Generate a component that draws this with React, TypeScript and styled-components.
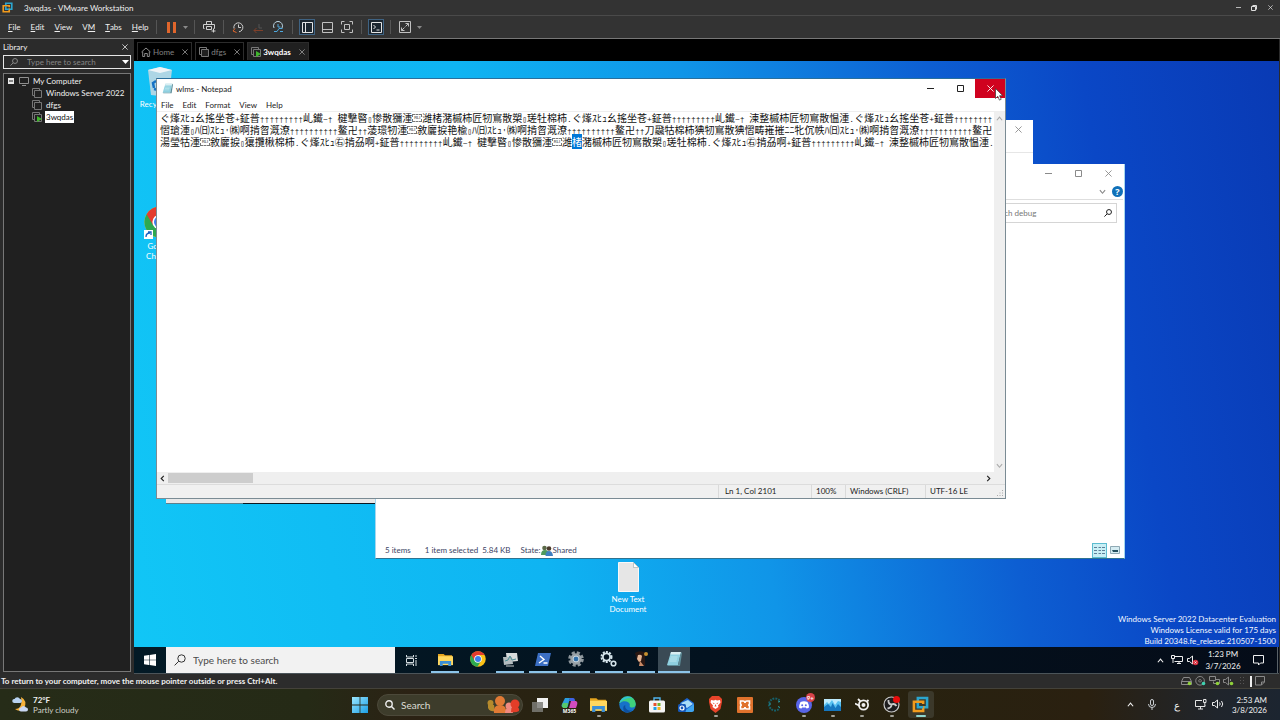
import React from "react";
import styled, { createGlobalStyle, css } from "styled-components";

const ui = `Lato, "Open Sans", "Noto Sans", sans-serif`;

const Global = createGlobalStyle`
  * { box-sizing: border-box; }
  body { margin: 0; background: #2b2b2b; font-family: ${ui}; font-size: 8px; line-height: 12px; }
  button, input { font: inherit; color: inherit; }
  svg { display: block; flex: none; }
`;

const Plain = styled.button`
  display: flex;
  align-items: center;
  justify-content: center;
  padding: 0;
  border: 0;
  background: none;
  white-space: nowrap;
`;

/* ---------- VMware shell ---------- */

const Screen = styled.div`
  display: flex;
  flex-direction: column;
  min-height: 100vh;
  color: #f0f0f0;
  overflow: hidden;
`;

const TitleBar = styled.header`
  display: flex;
  align-items: center;
  gap: 11px;
  height: 16px;
  padding: 0 4px 0 2px;
  background: #333;
  border-bottom: 1px solid #4a4a4a;
`;

const Caption = styled.h1`
  flex: 1;
  margin: 0;
  font-size: 8px;
  font-weight: 400;
`;

const WindowControls = styled.div`
  display: flex;
  gap: 4px;
`;

const ControlButton = styled(Plain)`
  width: 12px;
  height: 14px;
`;

const MenuBar = styled.nav`
  display: flex;
  align-items: center;
  height: 23px;
  padding-left: 8px;
  background: #333;
  border-bottom: 1px solid #777;
`;

const Menus = styled.div`
  display: flex;
  gap: 10px;
  width: 144px;
`;

const Separator = styled.span`
  width: 1px;
  height: 14px;
  margin: 0 4px;
  background: #555;
`;

const Tool = styled(Plain)<{ $on?: boolean }>`
  width: ${(p) => (p.$on ? 16 : 20)}px;
  height: 16px;
  margin: 0 ${(p) => (p.$on ? 2 : 0)}px;
  border: ${(p) => (p.$on ? "1px solid #3f6383" : "0")};
  background: ${(p) => (p.$on ? "#1d2730" : "none")};
`;

const Caret = styled(Plain)`
  width: 9px;
  height: 16px;
`;

const Body = styled.div`
  display: flex;
  flex: 1;
`;

const Sidebar = styled.aside`
  display: flex;
  flex-direction: column;
  width: 134px;
  padding: 2px 3px 2px;
  background: #2b2b2b;
`;

const SidebarHead = styled.div`
  display: flex;
  justify-content: space-between;
  align-items: center;
  height: 12px;
  margin-bottom: 2px;
  padding-right: 3px;
`;

const LibrarySearch = styled.label`
  display: flex;
  align-items: center;
  gap: 9px;
  height: 14px;
  padding: 0 1px 0 6px;
  border: 1px solid #e6e6e6;
  margin-bottom: 4px;
  color: #858585;

  input {
    flex: 1;
    min-width: 0;
    height: 12px;
    padding: 0;
    border: 0;
    outline: 0;
    background: none;
  }
  input::placeholder { color: #858585; opacity: 1; }
`;

const Tree = styled.ul`
  flex: 1;
  margin: 0;
  padding: 1px 4px 0;
  list-style: none;
  border: 1px solid #777;
  background: #202020;
`;

const Leaf = styled.li<{ $child?: boolean }>`
  display: flex;
  align-items: center;
  gap: 3px;
  height: 12px;
  padding-left: ${(p) => (p.$child ? 24 : 0)}px;
`;

const LeafName = styled.span<{ $selected?: boolean }>`
  padding: 0 1px;
  line-height: 12px;
  white-space: nowrap;
  ${(p) => p.$selected && css`background: #fff; color: #111;`}
`;

const Guest = styled.main`
  display: flex;
  flex-direction: column;
  flex: 1;
  min-width: 0;
  padding-right: 1px;
`;

const Tabs = styled.div`
  display: flex;
  align-items: flex-end;
  gap: 3px;
  height: 22px;
  padding: 0 3px 1px;
  background: #000;
`;

const Tab = styled.div<{ $active?: boolean }>`
  display: flex;
  align-items: center;
  gap: 5px;
  height: 18px;
  padding: 0 0 0 3px;
  border: 1px solid #2c2c2c;
  border-bottom: 0;
  background: ${(p) => (p.$active ? "#202020" : "#000")};
  color: ${(p) => (p.$active ? "#fff" : "#808080")};
  font-weight: ${(p) => (p.$active ? 700 : 400)};
`;

const TabName = styled(Plain)`
  gap: 2px;
`;

const TabClose = styled(Plain)`
  width: 12px;
  height: 12px;
  color: #a0a0a0;
`;

/* ---------- Guest desktop ---------- */

const Desktop = styled.section`
  position: relative;
  flex: 1;
  overflow: hidden;
  background: linear-gradient(80deg, #11c6f6 0%, #0fb4f2 34%, #1095e8 52%, #0d5ed2 72%, #0a47c6 84%, #093ab4 100%);
`;

const DesktopIcon = styled.div<{ $x: number; $y: number }>`
  position: absolute;
  left: ${(p) => p.$x}px;
  top: ${(p) => p.$y}px;
  display: flex;
  flex-direction: column;
  align-items: center;
  gap: 2px;
  width: 60px;
  color: #fff;
  line-height: 10px;
  text-align: center;
`;

const Frame = styled.section<{ $x: number; $y: number; $w: number; $h: number }>`
  position: absolute;
  left: ${(p) => p.$x}px;
  top: ${(p) => p.$y}px;
  display: flex;
  flex-direction: column;
  width: ${(p) => p.$w}px;
  height: ${(p) => p.$h}px;
  background: #fff;
  color: #222;
`;

const FrameTitle = styled.header`
  display: flex;
  align-items: center;
  justify-content: flex-end;
  flex: none;
  height: 19px;
`;

const FrameButton = styled(Plain)<{ $tone?: "hot" | "dark" }>`
  width: 30px;
  height: 19px;
  background: ${(p) => (p.$tone === "hot" ? "#d0021f" : "none")};
  color: ${(p) => (p.$tone === "hot" ? "#fff" : p.$tone === "dark" ? "#222" : "#8a8a8a")};
`;

const PropertiesBody = styled.div`
  flex: 1;
  margin-top: 13px;
  border-top: 1px solid #e6e6e6;
`;

const PropertiesFoot = styled.div`
  display: flex;
  height: 5px;
  border-bottom: 1px solid #5d7f8c;
  background: #e8e8e8;

  i { flex: 1; margin: 4px 0 -1px 77px; background: #0b1720; }
`;

const ExplorerFrame = styled(Frame)`
  padding-right: 1px;
  border: 1px solid #a5d6ee;
  border-top: 0;
  border-bottom-color: #2f7391;
`;

const Ribbon = styled.div`
  display: flex;
  align-items: center;
  justify-content: flex-end;
  gap: 6px;
  height: 17px;
  border-bottom: 1px solid #dedede;
  color: #888;
`;

const ExplorerSearch = styled.label`
  display: flex;
  align-items: center;
  align-self: flex-end;
  width: 145px;
  height: 20px;
  margin: 3px 6px 0 0;
  padding: 0 4px 0 16px;
  border: 1px solid #d5d5d5;

  input {
    flex: 1;
    min-width: 0;
    padding: 0;
    border: 0;
    outline: 0;
    background: none;
  }
  input::placeholder { color: #777; opacity: 1; }
`;

const ExplorerStatus = styled.footer`
  display: flex;
  align-items: center;
  height: 16px;
  margin-top: auto;
  padding: 0 2px 0 9px;
  color: #3b4464;

  span { margin-right: 14px; }
  span:nth-child(2) { margin-right: 4px; }
  span:nth-child(3) { margin-right: 10px; }
`;

const ViewModes = styled.div`
  display: flex;
  align-items: center;
  gap: 2px;
  margin-left: auto;
`;

const ViewButton = styled(Plain)<{ $on?: boolean }>`
  width: ${(p) => (p.$on ? 15 : 12)}px;
  height: 15px;
  border: ${(p) => (p.$on ? "1px solid #5cbcd0" : "0")};
  background: ${(p) => (p.$on ? "#c9eff5" : "none")};
`;

const NotepadFrame = styled(Frame)`
  border: 1px solid #7a8b94;
  border-top-color: #2a6f9c;
`;

const NotepadTitle = styled.div`
  display: flex;
  align-items: center;
  gap: 3px;
  flex: 1;
  padding-left: 5px;
`;

const NotepadMenu = styled.div`
  display: flex;
  gap: 9px;
  height: 14px;
  padding: 1px 0 0 4px;
  border-bottom: 1px solid #eee;
`;

const NotepadMain = styled.div`
  display: flex;
  flex: 1;
  min-height: 0;
`;

const Sheet = styled.div`
  flex: 1;
  min-width: 0;
  padding-left: 3px;
  overflow: hidden;
  color: #111;
  font-family: "Noto Sans CJK SC", "Noto Sans CJK JP", "DejaVu Sans Mono", sans-serif;
  font-size: 10px;
  line-height: 12px;
  white-space: pre;
`;

const Line = styled.div`
  height: 12px;
`;

const Mono = styled.span`
  font-family: "Liberation Mono", monospace;
  font-size: 8px;
`;

const Selected = styled.mark`
  background: #0078d7;
  color: #fff;
`;

const ControlMark = styled.span`
  display: inline-block;
  width: 10px;
  height: 8px;
  border: 1px dashed #777;
  font-family: "Liberation Sans", sans-serif;
  font-size: 4px;
  line-height: 6px;
  text-align: center;
  vertical-align: top;
  margin-top: 2px;
`;

const VBar = styled.div`
  display: flex;
  flex-direction: column;
  align-items: center;
  justify-content: space-between;
  width: 11px;
  padding: 3px 0;
  background: #efefef;
  color: #aaa;
`;

const HBar = styled.div`
  display: flex;
  align-items: center;
  height: 12px;
  padding: 0 13px 0 2px;
  background: #efefef;
`;

const Track = styled.div`
  flex: 1;
  margin: 0 2px;
`;

const Thumb = styled.div`
  width: 85px;
  height: 10px;
  background: #cdcdcd;
`;

const NotepadStatus = styled.footer`
  display: flex;
  justify-content: flex-end;
  position: relative;
  height: 14px;
  border-top: 1px solid #dcdcdc;
  background: #f0f0f0;
`;

const StatusCell = styled.span<{ $w: number; $pad?: number }>`
  width: ${(p) => p.$w}px;
  padding-left: ${(p) => p.$pad ?? 4}px;
  border-left: 1px solid #dadada;
  white-space: nowrap;
`;

const Grip = styled.svg`
  position: absolute;
  right: 1px;
  bottom: 1px;
`;

const Pointer = styled.svg`
  position: absolute;
  left: 861px;
  top: 27px;
`;

const Watermark = styled.p`
  position: absolute;
  right: 3px;
  bottom: 0;
  margin: 0;
  color: #f4f8ff;
  line-height: 11px;
  text-align: right;
`;

/* ---------- Guest taskbar ---------- */

const GuestBar = styled.footer`
  display: flex;
  height: 27px;
  background: linear-gradient(90deg, #031a26, #03121f 50%, #050c18);
  border-bottom: 1px solid #4b5459;
`;

const StartButton = styled(Plain)`
  width: 32px;
`;

const GuestSearch = styled.label`
  display: flex;
  align-items: center;
  gap: 7px;
  width: 229px;
  padding-left: 8px;
  background: #f2f2f2;
  color: #333;
  font-size: 10px;

  input {
    flex: 1;
    min-width: 0;
    padding: 0;
    border: 0;
    outline: 0;
    background: none;
  }
  input::placeholder { color: #4a4a4a; opacity: 1; }
`;

const GuestApps = styled.div`
  display: flex;
  justify-content: space-between;
  width: 261px;
  margin-left: 2px;
`;

const GuestApp = styled(Plain)<{ $open?: boolean; $active?: boolean }>`
  width: 32px;
  background: ${(p) => (p.$active ? "#3a4a55" : "none")};
  border-style: solid;
  border-width: 0 0 2px;
  border-color: transparent;
  border-image: ${(p) =>
    p.$active
      ? "linear-gradient(#8cc4ea, #8cc4ea) 1"
      : p.$open
      ? "linear-gradient(90deg, transparent 9%, #8cc4ea 9%, #8cc4ea 91%, transparent 91%) 1"
      : "none"};
`;

const GuestTray = styled.div`
  display: flex;
  align-items: center;
  gap: 3px;
  margin-left: auto;
  padding-right: 1px;
`;

const TrayButton = styled(Plain)`
  width: 13px;
  height: 18px;
`;

const NoticeButton = styled(Plain)`
  width: 33px;
  height: 26px;
  padding-right: 5px;
  border-right: 1px solid #5a6268;
`;

const Clock = styled.time`
  width: 40px;
  padding-left: 2px;
  text-align: center;
`;

/* ---------- Status line and host taskbar ---------- */

const StatusLine = styled.footer`
  display: flex;
  align-items: center;
  justify-content: space-between;
  height: 15px;
  padding: 0 14px 0 1px;
  background: #2c2c2c;
  border-bottom: 1px solid #44423a;
  font-weight: 700;
`;

const Devices = styled.div`
  display: flex;
  align-items: center;
  gap: 3px;
`;

const HostBar = styled.footer`
  display: grid;
  grid-template-columns: 1fr auto 1fr;
  align-items: center;
  height: 31px;
  background: linear-gradient(90deg, #262c18 0%, #252a16 24%, #2b2214 32%, #26240f 55%, #2a2010 85%, #20252c 95%, #1c2530 100%);
`;

const Weather = styled(Plain)`
  justify-self: start;
  gap: 4px;
  padding-left: 12px;
  text-align: left;
  line-height: 10px;

  strong { display: block; font-weight: 700; }
  small { font-size: 8px; color: #d0d0c8; }
`;

const Dock = styled.div`
  display: flex;
  align-items: center;
  width: 588px;
`;

const HostStart = styled(Plain)`
  width: 31px;
  height: 27px;
  padding-right: 3px;
`;

const HostSearch = styled.label`
  display: flex;
  align-items: center;
  gap: 6px;
  width: 146px;
  height: 22px;
  padding-left: 7px;
  padding-right: 2px;
  border: 1px solid #4c493a;
  border-radius: 11px;
  background: #3d3c2b;
  font-size: 10px;

  input {
    flex: 1;
    min-width: 0;
    padding: 0;
    border: 0;
    outline: 0;
    background: none;
  }
  input::placeholder { color: #dcdcd4; opacity: 1; }
`;

const DockApps = styled.div`
  display: flex;
  flex: 1;
  justify-content: space-between;
  margin-left: 4px;
`;

const DockApp = styled(Plain)<{ $run?: boolean; $active?: boolean }>`
  position: relative;
  width: 26px;
  height: 27px;
  border-radius: 3px;
  background: ${(p) => (p.$active ? "#3b382a" : "none")};

  &::after {
    content: "";
    position: absolute;
    bottom: 1px;
    left: 50%;
    width: ${(p) => (p.$active ? 10 : 4)}px;
    height: 2px;
    border-radius: 1px;
    transform: translateX(-50%);
    background: ${(p) => (p.$active ? "#8fd6d0" : p.$run ? "#a3a299" : "transparent")};
  }
`;

const Badge = styled.span`
  position: absolute;
  top: 2px;
  right: 2px;
  min-width: 9px;
  height: 9px;
  border-radius: 5px;
  background: #d9434a;
  color: #fff;
  font-size: 6px;
  font-weight: 700;
  line-height: 9px;
`;

const HostTray = styled.div`
  display: flex;
  align-items: center;
  justify-self: end;
  padding-right: 13px;
`;

const HostTrayButton = styled(Plain)<{ $w: number }>`
  width: ${(p) => p.$w}px;
  height: 20px;
  font-size: 10px;
`;

const HostClock = styled.time`
  width: 42px;
  line-height: 10px;
  text-align: right;
`;

/* ---------- Small drawings ---------- */

const Cross = ({ s = 7 }: { s?: number }) => (
  <svg width={s} height={s} viewBox="0 0 8 8" stroke="currentColor" fill="none"><path d="M.5.5l7 7M7.5.5l-7 7" /></svg>
);
const Dash = ({ s = 7 }: { s?: number }) => (
  <svg width={s} height={s} viewBox="0 0 7 7" stroke="currentColor"><path d="M0 3.5h7" /></svg>
);
const Square = ({ s = 7 }: { s?: number }) => (
  <svg width={s} height={s} viewBox="0 0 7 7" stroke="currentColor" fill="none"><path d="M.5.5h6v6h-6z" /></svg>
);
const Lens = ({ s = 9 }: { s?: number }) => (
  <svg width={s} height={s} viewBox="0 0 12 12" stroke="currentColor" strokeWidth={12 / s} fill="none"><circle cx="7.5" cy="4.5" r="3.7" /><path d="M4.8 7.2L.6 11.4" /></svg>
);
const Down = () => (
  <svg width="5" height="3" viewBox="0 0 5 3"><path d="M0 0h5L2.5 3z" fill="#8a8a8a" /></svg>
);
const Chevron = ({ d }: { d: "u" | "d" | "l" | "r" }) => (
  <svg width="7" height="7" viewBox="0 0 8 8" fill="none" stroke="currentColor" strokeWidth="1.3">
    <path d={{ u: "M1 6l3-3.5L7 6", d: "M1 2.5L4 6l3-3.5", l: "M5.5 1L2.5 4l3 3", r: "M2.5 1l3 3-3 3" }[d]} />
  </svg>
);
const VmLogo = ({ s }: { s: number }) => (
  <svg width={s} height={s} viewBox="0 0 16 16" fill="none" strokeWidth="2.4">
    <path d="M5.5 7V1.8h8.7v8.7H10" stroke="#2ba5cf" />
    <path d="M10.5 9.5v4.7H1.8V5.5h8.7v2" stroke="#f29b1d" />
    <path d="M5.5 6.5v4h5" stroke="#2ba5cf" />
  </svg>
);
const Vm = ({ on }: { on?: boolean }) => (
  <svg width="10" height="10" viewBox="0 0 10 10" fill="none" stroke="#777">
    <path d="M2 7.5H.5v-7h7V2" /><path d="M2.5 2.5h7v7h-7z" fill="#202020" />
    {on && <path d="M5 4l5 3-5 3z" fill="#3fb52c" stroke="none" />}
  </svg>
);
const Monitor = () => (
  <svg width="10" height="9" viewBox="0 0 10 9" fill="none" stroke="#8f8f8f"><path d="M.5.5h9v6h-9zM3 8.5h4" /></svg>
);
const HomeIcon = () => (
  <svg width="10" height="10" viewBox="0 0 10 10" fill="none" stroke="#8b8b8b"><path d="M.5 5L5 1l4.500 4M1.700 4.500v5h2v-3h2.600v3h2v-5" /></svg>
);
const Flag10 = ({ s = 12 }: { s?: number }) => (
  <svg width={s} height={s} viewBox="0 0 12 12" fill="#fff"><path d="M0 1.700l5-.7v4.700H0zM5.600.9L12 0v5.700H5.600zM0 6.300h5V11l-5-.7zM5.600 6.300H12V12l-6.400-.9z" /></svg>
);
const Flag11 = () => (
  <svg width="16" height="16" viewBox="0 0 16 16">
    <defs><linearGradient id="w11" x1="0" y1="0" x2="1" y2="1"><stop offset="0" stopColor="#9be6ff" /><stop offset="1" stopColor="#1b9fe4" /></linearGradient></defs>
    <path fill="url(#w11)" d="M0 0h7.600v7.600H0zM8.400 0H16v7.600H8.400zM0 8.400h7.600V16H0zM8.400 8.400H16V16H8.400z" />
  </svg>
);
const Folder = ({ s = 16 }: { s?: number }) => (
  <svg width={s} height={s} viewBox="0 0 16 16">
    <path d="M0 2h6l1.500 1.500H15V8H0z" fill="#e5a51f" /><path d="M0 4.500h16V14H0z" fill="#ffd75e" />
    <path d="M2 15V9.500h12V15h-3v-2.500H5V15z" fill="#3a8fd6" />
  </svg>
);
const Chrome = ({ s = 16 }: { s?: number }) => (
  <svg width={s} height={s} viewBox="0 0 32 32">
    <circle cx="16" cy="16" r="15.500" fill="#fbc116" />
    <path d="M2.600 8.200A15.500 15.500 0 0 0 15 31.500L22 20z" fill="#2da94f" />
    <path d="M2.600 8.200A15.500 15.500 0 0 1 29.400 8.200H16L9 19z" fill="#e33b2e" />
    <circle cx="16" cy="16" r="7.600" fill="#fff" /><circle cx="16" cy="16" r="6" fill="#3b7ded" />
  </svg>
);
const NotepadIcon = ({ s = 11 }: { s?: number }) => (
  <svg width={s} height={s} viewBox="0 0 16 16">
    <path d="M5 1h10l-3 13H1z" fill="#8fd0e0" /><path d="M5 1h10l-.6 2.500H4.300z" fill="#d9eef2" />
    <path d="M12 14L15 1l1 1-2 13H2l-1-1z" fill="#5e8d99" /><path d="M4.500 6h7M4 8h7M3.500 10h7" stroke="#c8ecf3" strokeWidth=".8" />
  </svg>
);
const Gear = () => (
  <svg width="16" height="16" viewBox="0 0 16 16">
    <circle cx="8" cy="8" r="6.300" fill="none" stroke="#8e979c" strokeWidth="3" strokeDasharray="3 1.950" />
    <circle cx="8" cy="8" r="4.200" fill="#2f6fa8" stroke="#9aa3a8" strokeWidth="3" />
    <circle cx="8" cy="8" r="2.900" fill="none" stroke="#dceaf2" strokeWidth=".8" />
  </svg>
);
const Clockface = ({ c }: { c: string }) => (
  <svg width="12" height="12" viewBox="0 0 12 12" fill="none" stroke={c}>
    <path d="M2 7.500A4.500 4.500 0 1 1 7 10.800" /><path d="M6.500 3.500v3h2.500" /><path d="M4.500 11.500L1 10l2-2.500" stroke="#e0662c" />
  </svg>
);

const Net = () => (
  <svg width="12" height="10" viewBox="0 0 12 10" fill="none" stroke="#eee"><path d="M3.500 1.500h8v5h-8M.5.5h3v3h-3zM2 3.500V8M6 8.500h4M8 6.500v2" /></svg>
);
const Speaker = ({ children }: { children?: React.ReactNode }) => (
  <svg width="12" height="11" viewBox="0 0 12 11" fill="none" stroke="#eee"><path d="M.5 3.500h2l3-2.500v8l-3-2.500h-2z" />{children}</svg>
);

/* ---------- Notepad text ---------- */

const head = "ぐ㷨ｽﾋｭ幺搖坐苍+鉦普";
const tick = (n: number) => "†".repeat(n);
const english = "楗撃暋▯惨散獼湩";
const rows = [
  `${head}${tick(9)}乢䥫~† ${english}#潍楮潴槭柿匠牣窵散槊▯瑳牡棉柿.${head}${tick(9)}乢䥫~† 湅整槭柿匠牣窵散愠湩.${head}${tick(8)}`,
  `慴瑲湩▯ﾊ㈰ｽﾋｭ'㈱啊掯曶溉潦${tick(10)}鳌卍††蓤璟牣湩#敘廲捩艳楡▯ﾊ㈰ｽﾋｭ'㈱啊掯曶溉潦${tick(10)}鳌卍††刀飝牯棉柿猠牣窵散猠慴畴嶊摧ﾆﾆ牝伔帙ﾊ㈰ｽﾋｭ'㈱啊掯曶溉潦${tick(11)}鳌卍`,
  `湯瑩牯湩#敘廲捩▯獽攬楸棉柿.ぐ㷨ｽﾋｭ㊨掯刕啊+鉦普${tick(9)}乢䥫~† ${english}#潍[楮]潴槭柿匠牣窵散槊▯瑳牡棉柿.ぐ㷨ｽﾋｭ㊨掯刕啊+鉦普${tick(9)}乢䥫~† 湅整槭柿匠牣窵散愠湩.`,
];

const renderRow = (row: string) =>
  row.split(/([†~+.' ▯]+|#|\[.\])/).map((part, i) => {
    if (!part) return null;
    if (part === "#") return <ControlMark key={i}>RLI</ControlMark>;
    if (part[0] === "[") return <Selected key={i}>{part[1]}</Selected>;
    return i % 2 ? <Mono key={i}>{part}</Mono> : part;
  });

/* ---------- Dock ---------- */

const dock: { name: string; run?: boolean; active?: boolean; badge?: string; art: React.ReactNode }[] = [
  { name: "Task view", art: <svg width="16" height="14" viewBox="0 0 16 14"><path d="M5 0h11v10H5z" fill="#f1f1f1" /><path d="M0 4h11v10H0z" fill="#7d7d78" opacity=".85" /></svg> },
  { name: "Microsoft 365", art: <svg width="17" height="16" viewBox="0 0 17 16"><path d="M4 1h5L6.500 10H1Q0 9 1 7z" fill="#2a9de0" /><path d="M2 6h5l-1 5H2Q0 9 2 6z" fill="#57c86a" /><path d="M9 1h3q2 0 2 3l-2 0H8z" fill="#3e63e6" /><path d="M10 4h5q2 1 1 4l-1 3H8z" fill="#d14cc0" /><text x="8.500" y="16" textAnchor="middle" fontFamily="Open Sans" fontSize="5" fontWeight="700" fill="#fff">M365</text></svg> },
  { name: "File Explorer", run: true, art: <Folder s={17} /> },
  { name: "Edge", art: <svg width="17" height="17" viewBox="0 0 16 16"><circle cx="8" cy="8" r="7.800" fill="#1672c9" /><path d="M.3 7A7.800 7.800 0 0 1 15.800 7.500c0 3-2.500 3.800-5 3-1.500-.6-.5-1.500-.6-2.500C9.800 5 4 3.500.3 7z" fill="#3fd17c" /><path d="M.3 7C2 1 9-1 13 2 8 1 4 3 .3 7z" fill="#31bde0" /><path d="M6 8.500c-1 3 2 6 6.500 5a7.800 7.800 0 0 1-7 1.800C3 12 4 9 6 8.500z" fill="#0d4f9e" /></svg> },
  { name: "Store", art: <svg width="16" height="16" viewBox="0 0 16 16"><path d="M5 4V1h6v3" fill="none" stroke="#4fb3ec" strokeWidth="1.400" /><rect y="3.500" width="16" height="12" rx="1.500" fill="#f4f4f4" /><path d="M4.500 6h3v3h-3z" fill="#e8502e" /><path d="M8.500 6h3v3h-3z" fill="#76b52c" /><path d="M4.500 10h3v3h-3z" fill="#1f9fe6" /><path d="M8.500 10h3v3h-3z" fill="#f5b51b" /></svg> },
  { name: "Outlook", art: <svg width="17" height="16" viewBox="0 0 17 16"><path d="M2 6l7-5 7 5v8H3z" fill="#1b66d2" /><path d="M3 6l7-3 5 4-6 4z" fill="#a8ddf9" /><path d="M5 15l11-8v6q0 2-2 2z" fill="#3fa5f0" /><rect y="7" width="8" height="8" rx="1.500" fill="#1557b8" /><circle cx="4" cy="11" r="2" fill="none" stroke="#fff" strokeWidth="1.200" /></svg> },
  { name: "Brave", run: true, art: <svg width="15" height="17" viewBox="0 0 15 17"><path d="M4 0h7l3 3v3l-1.500 7L7.500 17l-5-4L1 6V3z" fill="#e8442a" /><path d="M3 4l3 .5 1.500-.8L9 4.500l3-.5.5 2.500-2.500 3 .5 1.500-3 2-3-2 .5-1.500-2.500-3z" fill="#fff" /><path d="M4.500 6.500l2 .8-.5 1zM10.500 6.500l-2 .8.500 1zM7.500 8l1 2.500h-2z" fill="#e8442a" /></svg> },
  { name: "XAMPP", art: <svg width="16" height="16" viewBox="0 0 16 16"><rect width="16" height="16" rx="1" fill="#e0722c" /><path d="M3.500 4H6q2 0 2 2 0-2 2-2h2.500v3q0 1-1.500 1 1.500 0 1.500 1v3H10q-2 0-2-2 0 2-2 2H3.500V9q0-1 1.500-1-1.500 0-1.500-1z" fill="none" stroke="#fff" strokeWidth="1.600" /></svg> },
  { name: "Cutter", art: <svg width="15" height="15" viewBox="0 0 15 15" fill="none"><path d="M12.500 3.500A6 6 0 1 0 12.500 11.500" stroke="#15616c" strokeWidth="2" strokeDasharray="1.800 1" /><path d="M13 4.500l-2 .5M13 10.500l-2-1M2 7h2" stroke="#2aa6b0" /></svg> },
  { name: "Discord", run: true, badge: "9+", art: <svg width="16" height="16" viewBox="0 0 16 16"><circle cx="8" cy="8" r="8" fill="#5865e8" /><path d="M4.500 5Q8 3.700 11.500 5q1.700 3 1.500 5.500-1.500 1-2.500 1l-.6-1H6.100l-.6 1Q4 11.500 3 10.500 3 8 4.500 5z" fill="#fff" /><circle cx="6.200" cy="8.300" r="1" fill="#5865e8" /><circle cx="9.800" cy="8.300" r="1" fill="#5865e8" /></svg> },
  { name: "Monitor", run: true, art: <svg width="17" height="14" viewBox="0 0 17 14"><path d="M0 1h17v12H0z" fill="#57c1f0" /><path d="M0 1h17v3L14 3l-3 4-3-5-3 4-2-2-3 3z" fill="#bdebfd" /><path d="M0 9l4-3 3 3 1.500-4 3 5L14 6l3 3v4H0z" fill="#1577bf" /></svg> },
  { name: "Steam", run: true, art: <svg width="15" height="15" viewBox="0 0 15 15" fill="none" stroke="#f0f0f0"><circle cx="8.500" cy="8" r="4.600" strokeWidth="1.800" /><circle cx="8.500" cy="8" r="2" fill="#f0f0f0" stroke="none" /><path d="M0 6.500l5 2.500M3 2l2.500 2.500M13.500 3l-1.500 1.500" strokeWidth="1.800" /></svg> },
  { name: "OBS", run: true, art: <svg width="17" height="17" viewBox="0 0 17 17"><circle cx="8.500" cy="8.500" r="7.500" fill="#1d1d1f" stroke="#c9c9c9" strokeWidth="1.200" /><path d="M8.500 8.500Q5 8 5.500 4M8.500 8.500q3-1.500 5 1.500M8.500 8.500q0 3.500-4 4" fill="none" stroke="#c9c9c9" strokeWidth="1.800" /><circle cx="13.500" cy="3.500" r="3.500" fill="#e80c0c" /></svg> },
  { name: "VMware", run: true, active: true, art: <VmLogo s={17} /> },
];

const guestApps: { name: string; open?: boolean; active?: boolean; art: React.ReactNode }[] = [
  { name: "File Explorer", open: true, art: <Folder s={15} /> },
  { name: "Chrome", art: <Chrome s={16} /> },
  { name: "Process monitor", open: true, art: <svg width="16" height="15" viewBox="0 0 16 15"><path d="M4 1h11l1 8-11 1z" fill="#d8dcdd" /><path d="M1 5h9l1 7-9 1z" fill="#b4bdc0" /><path d="M3 9l3-1 2-4 2 4 4-1" fill="none" stroke="#4b8d94" /><path d="M4 14h8" stroke="#c7cccd" /></svg> },
  { name: "PowerShell", open: true, art: <svg width="16" height="13" viewBox="0 0 16 13"><path d="M3 0h13l-3 13H0z" fill="#3b6fc4" /><path d="M5 3l4 3.500L4 10M8.500 10h4" fill="none" stroke="#fff" strokeWidth="1.400" /></svg> },
  { name: "Settings", open: true, art: <Gear /> },
  { name: "Services", open: true, art: <svg width="17" height="16" viewBox="0 0 17 16" fill="none" stroke="#d5e4ea"><circle cx="6.500" cy="6" r="5" strokeWidth="2" strokeDasharray="2 1.200" /><circle cx="6.500" cy="6" r="3.600" strokeWidth="1.800" /><circle cx="13.500" cy="12.500" r="2.300" strokeWidth="1.600" /></svg> },
  { name: "Portrait", open: true, art: <svg width="15" height="16" viewBox="0 0 15 16"><path d="M1 2Q5-1 10 1l1 4v10l-5-2-3-4z" fill="#2a1712" /><path d="M4 4q3-1 4 1l-1 5-2 1-2-3z" fill="#e4b494" /><path d="M6 10l4 5H5z" fill="#c98a66" /><circle cx="12" cy="3" r="2" fill="#c58f2d" /></svg> },
  { name: "Notepad", open: true, active: true, art: <NotepadIcon s={16} /> },
];

const Device = ({ c, d }: { c?: string; d: string }) => (
  <svg width="11" height="10" viewBox="0 0 11 10" fill="none" stroke="#8a8a8a"><path d={d} />{c && <circle cx="8.500" cy="7.500" r="1.800" fill={c} stroke="none" />}</svg>
);

export default function App() {
  return (
    <Screen>
      <Global />
      <TitleBar>
        <VmLogo s={11} />
        <Caption>3wqdas - VMware Workstation</Caption>
        <WindowControls>
          <ControlButton aria-label="Minimize"><Dash s={5} /></ControlButton>
          <ControlButton aria-label="Restore"><svg width="6" height="6" viewBox="0 0 6 6" fill="none" stroke="#ddd"><path d="M.5 1.500h4v4h-4zM1.500.5h4v4" /></svg></ControlButton>
          <ControlButton aria-label="Close"><Cross s={5} /></ControlButton>
        </WindowControls>
      </TitleBar>

      <MenuBar>
        <Menus>
          {["File", "Edit", "View", "VM", "Tabs", "Help"].map((m) => <Plain key={m}>{m === "VM" ? <>V<u>M</u></> : <><u>{m[0]}</u>{m.slice(1)}</>}</Plain>)}
        </Menus>
        <Separator />
        <Tool aria-label="Suspend"><svg width="9" height="11" viewBox="0 0 9 11" fill="#e0662c"><path d="M0 0h3v11H0zM6 0h3v11H6z" /></svg></Tool>
        <Caret aria-label="Power options"><Down /></Caret>
        <Separator />
        <Tool aria-label="Send keys"><svg width="13" height="12" viewBox="0 0 13 12" fill="none" stroke="#d0d0d0"><path d="M3.500 3.500v-3h5v3M1.500 7.500h-1v-4h11v4h-1M3.500 5.500h5v3h-5zM8.500 10h4M10.500 8v3.500" /></svg></Tool>
        <Separator />
        <Tool aria-label="Take snapshot"><Clockface c="#cfcfcf" /></Tool>
        <Tool aria-label="Revert snapshot"><svg width="11" height="11" viewBox="0 0 11 11" fill="none" stroke="#80402a"><path d="M1 8.500h9M3.500 6L1 8.500 3.500 11" /><path d="M6 2v4h3" stroke="#555" /></svg></Tool>
        <Tool aria-label="Manage snapshots"><svg width="12" height="12" viewBox="0 0 12 12" fill="none" stroke="#4ea8dd"><path d="M2 7A4.500 4.500 0 1 1 10 7" stroke="#bcd6e4" /><path d="M6 3v3h2.500M2 10.500h3l2-3h3.500M8 10.500h3" /></svg></Tool>
        <Separator />
        <Tool $on aria-label="Show library"><svg width="11" height="11" viewBox="0 0 11 11" fill="none" stroke="#e4e4e4"><path d="M.5.5h10v10H.5zM3.500 1v9" /></svg></Tool>
        <Tool aria-label="Show thumbnails"><svg width="11" height="11" viewBox="0 0 11 11" fill="none" stroke="#c0c0c0"><path d="M.5.5h10v10H.5zM1 7.500h9" /></svg></Tool>
        <Tool aria-label="Full screen"><svg width="12" height="12" viewBox="0 0 12 12" fill="none" stroke="#c0c0c0"><path d="M.5 3.500v-3h3M8.500.5h3v3M11.500 8.500v3h-3M3.500 11.500h-3v-3M3.500 3.500h5v5h-5z" /></svg></Tool>
        <Separator />
        <Tool $on aria-label="Console"><svg width="11" height="11" viewBox="0 0 11 11" fill="none" stroke="#e4e4e4"><path d="M.5.5h10v10H.5zM2.500 3l2 2-2 2M5.500 8h3" /></svg></Tool>
        <Separator />
        <Tool aria-label="Stretch"><svg width="12" height="12" viewBox="0 0 12 12" fill="none" stroke="#c0c0c0"><path d="M.5.5h11v11H.5zM6.500 2.500h3v3M5.500 9.500h-3v-3M9.500 2.500l-3 3M2.500 9.500l3-3" /></svg></Tool>
        <Caret aria-label="Stretch options"><Down /></Caret>
      </MenuBar>

      <Body>
        <Sidebar>
          <SidebarHead><span>Library</span><Plain aria-label="Close library"><Cross s={6} /></Plain></SidebarHead>
          <LibrarySearch>
            <Lens s={8} />
            <input aria-label="Search library" placeholder="Type here to search" />
            <svg width="7" height="4" viewBox="0 0 7 4"><path d="M0 0h7L3.500 4z" fill="#fff" /></svg>
          </LibrarySearch>
          <Tree>
            <Leaf><svg width="8" height="6" viewBox="0 0 8 6"><path d="M0 0h6v6H0z" fill="#e8e8e8" /><path d="M1 3h4" stroke="#222" /></svg><Monitor /><LeafName>My Computer</LeafName></Leaf>
            <Leaf $child><Vm /><LeafName>Windows Server 2022</LeafName></Leaf>
            <Leaf $child><Vm /><LeafName>dfgs</LeafName></Leaf>
            <Leaf $child><Vm on /><LeafName $selected>3wqdas</LeafName></Leaf>
          </Tree>
        </Sidebar>

        <Guest>
          <Tabs>
            <Tab><TabName><HomeIcon />Home</TabName><TabClose aria-label="Close Home"><Cross s={6} /></TabClose></Tab>
            <Tab><TabName><Vm />dfgs</TabName><TabClose aria-label="Close dfgs"><Cross s={6} /></TabClose></Tab>
            <Tab $active><TabName><Vm on />3wqdas</TabName><TabClose aria-label="Close 3wqdas"><Cross s={6} /></TabClose></Tab>
          </Tabs>

          <Desktop>
            <DesktopIcon $x={-4} $y={5}>
              <svg width="28" height="31" viewBox="0 0 28 31"><path d="M2 4l12-3 12 3-3 25-9 1-9-1z" fill="#c9d9e2" opacity=".85" /><path d="M2 4l12-3 12 3-12 3z" fill="#eef4f7" /><path d="M10 14l4 1-1 4M8 22l-1-5 3-2M12 24l-4-1" fill="none" stroke="#1673c5" strokeWidth="2.500" /></svg>
              Recycle Bin
            </DesktopIcon>
            <DesktopIcon $x={-4} $y={145}>
              <svg width="32" height="33" viewBox="0 0 32 33"><Chrome s={32} /><path d="M0 24h9v9H0z" fill="#fff" /><path d="M2 31q0-4 4-4M4 26h3v3" fill="none" stroke="#1b5fc0" strokeWidth="1.300" /></svg>
              <span>Google<br />Chrome</span>
            </DesktopIcon>
            <DesktopIcon $x={464} $y={501}>
              <svg width="21" height="30" viewBox="0 0 21 30"><path d="M.5.5h15l5 5v24H.5z" fill="#e6e6e6" stroke="#f8f8f8" /><path d="M15.500.5v5h5z" fill="#fff" stroke="#9aa" strokeWidth=".6" /></svg>
              <span>New Text<br />Document</span>
            </DesktopIcon>

            <Frame $x={32} $y={59} $w={867} $h={384}>
              <FrameTitle><FrameButton aria-label="Close properties"><Cross /></FrameButton></FrameTitle>
              <PropertiesBody />
              <PropertiesFoot><i /></PropertiesFoot>
            </Frame>

            <ExplorerFrame $x={241} $y={103} $w={750} $h={395}>
              <FrameTitle>
                <FrameButton aria-label="Minimize explorer"><Dash /></FrameButton>
                <FrameButton aria-label="Maximize explorer"><Square /></FrameButton>
                <FrameButton aria-label="Close explorer"><Cross /></FrameButton>
              </FrameTitle>
              <Ribbon>
                <Chevron d="d" />
                <svg width="11" height="11" viewBox="0 0 11 11"><circle cx="5.500" cy="5.500" r="5.500" fill="#1070b8" /><text x="5.500" y="9" textAnchor="middle" fontFamily="Open Sans" fontWeight="700" fontSize="9" fill="#fff">?</text></svg>
              </Ribbon>
              <ExplorerSearch><input aria-label="Search debug" placeholder="Search debug" /><Lens s={8} /></ExplorerSearch>
              <ExplorerStatus>
                <span>5 items</span><span>1 item selected</span><span>5.84 KB</span>State:
                <svg width="12" height="11" viewBox="0 0 12 11"><circle cx="3.500" cy="3" r="2.300" fill="#5c6b4a" /><path d="M0 10q0-5 4-5t4 5z" fill="#4f9a5b" /><circle cx="8" cy="3.500" r="2.300" fill="#4b3b2c" /><path d="M4.500 11q0-5 3.500-5t4 5z" fill="#3f7fc0" /></svg>
                <span>Shared</span>
                <ViewModes>
                  <ViewButton $on aria-label="Details view"><svg width="11" height="9" viewBox="0 0 11 9" stroke="#5c7f99"><path d="M0 1.500h3M0 4.500h3M0 7.500h3M4.500 1.500h2.500M4.500 4.500h2.500M4.500 7.500h2.500M8 1.500h3M8 4.500h3M8 7.500h3" /></svg></ViewButton>
                  <ViewButton aria-label="Large icons view"><svg width="10" height="8" viewBox="0 0 10 8"><path d="M.5.500h9v7h-9z" fill="#d5ecf2" stroke="#8fa9b4" /><path d="M2 4h6v2H3z" fill="#24505f" /></svg></ViewButton>
                </ViewModes>
              </ExplorerStatus>
            </ExplorerFrame>

            <NotepadFrame $x={22} $y={17} $w={850} $h={421}>
              <FrameTitle>
                <NotepadTitle><NotepadIcon />wlms - Notepad</NotepadTitle>
                <FrameButton $tone="dark" aria-label="Minimize notepad"><Dash /></FrameButton>
                <FrameButton $tone="dark" aria-label="Maximize notepad"><Square /></FrameButton>
                <FrameButton $tone="hot" aria-label="Close notepad"><Cross /></FrameButton>
              </FrameTitle>
              <NotepadMenu>{["File", "Edit", "Format", "View", "Help"].map((m) => <Plain key={m}>{m}</Plain>)}</NotepadMenu>
              <NotepadMain>
                <Sheet>{rows.map((r, i) => <Line key={i}>{renderRow(r)}</Line>)}</Sheet>
                <VBar><Chevron d="u" /><Chevron d="d" /></VBar>
              </NotepadMain>
              <HBar><Chevron d="l" /><Track><Thumb /></Track><Chevron d="r" /></HBar>
              <NotepadStatus>
                <StatusCell $w={93} $pad={6}>Ln 1, Col 2101</StatusCell>
                <StatusCell $w={34}>100%</StatusCell>
                <StatusCell $w={80}>Windows (CRLF)</StatusCell>
                <StatusCell $w={80}>UTF-16 LE</StatusCell>
                <Grip width="7" height="7" viewBox="0 0 7 7" fill="#aaa"><path d="M5 0h1v1H5zM5 2.500h1v1H5zM5 5h1v1H5zM2.500 2.500h1v1h-1zM2.500 5h1v1h-1zM0 5h1v1H0z" /></Grip>
              </NotepadStatus>
            </NotepadFrame>

            <Pointer width="9" height="13" viewBox="0 0 9 13"><path d="M.5.5v10l2.300-2.200 1.600 3.800 1.800-.8-1.600-3.600h3.200z" fill="#fff" stroke="#333" strokeWidth=".7" /></Pointer>
            <Watermark>Windows Server 2022 Datacenter Evaluation<br />Windows License valid for 175 days<br />Build 20348.fe_release.210507-1500</Watermark>
          </Desktop>

          <GuestBar>
            <StartButton aria-label="Start"><Flag10 /></StartButton>
            <GuestSearch><Lens s={12} /><input aria-label="Search Windows" placeholder="Type here to search" /></GuestSearch>
            <StartButton aria-label="Task view"><svg width="11" height="11" viewBox="0 0 11 11" fill="none" stroke="#d5dde0"><path d="M.5 0v2h7V0M.5 3.500h7v4h-7zM.5 11V9h7v2M10 0v2M10 5v6M9 3.500h2" /></svg></StartButton>
            <GuestApps>{guestApps.map((a) => <GuestApp key={a.name} aria-label={a.name} $open={a.open} $active={a.active}>{a.art}</GuestApp>)}</GuestApps>
            <GuestTray>
              <TrayButton aria-label="Hidden icons"><Chevron d="u" /></TrayButton>
              <TrayButton aria-label="Network"><Net /></TrayButton>
              <TrayButton aria-label="Volume"><Speaker><circle cx="8.500" cy="7.500" r="2.800" fill="#d92c3c" stroke="none" /><path d="M7.500 6.500l2 2M9.500 6.500l-2 2" strokeWidth=".8" /></Speaker></TrayButton>
              <Clock>1:23 PM<br />3/7/2026</Clock>
              <NoticeButton aria-label="Notifications"><svg width="11" height="11" viewBox="0 0 11 11" fill="none" stroke="#eee"><path d="M.5.5h10v7.500H7.500L5.500 10 5.500 8h-5z" /></svg></NoticeButton>
            </GuestTray>
          </GuestBar>
        </Guest>
      </Body>

      <StatusLine>
        <span>To return to your computer, move the mouse pointer outside or press Ctrl+Alt.</span>
        <Devices>
          <Device c="#8fd13a" d="M2.500 1.500h6l2 4v3H.5v-3zM.5 5.500h10" />
          <Device c="#3fd1b0" d="M5 .5a4.300 4.300 0 1 0 .1 0M5 3.500a1.300 1.300 0 1 0 .1 0" />
          <Device c="#8fd13a" d="M.5.5h6v4h-6zM4.500 5.500v2h6v-4h-4" />
          <Device c="#8fd13a" d="M.5 3.500h2l3-2.500v8l-3-2.500h-2zM7.500 3v2" />
          <svg width="10" height="10" viewBox="0 0 10 10" stroke="#555" strokeDasharray="1 2"><path d="M3.500 1v8M6.500 1v8" /></svg>
          <svg width="2" height="11"><path d="M0 0h2v11H0z" fill="#eee" /></svg>
          <Device d="M.5.5h9v5.500l-3 3h-6zM6.500 9V6h3" />
        </Devices>
      </StatusLine>

      <HostBar>
        <Weather>
          <svg width="17" height="17" viewBox="0 0 17 17"><path d="M9 1q7 4 3 11-4 5-9 1 8 0 6-12z" fill="#f5b13a" /><path d="M2 7a2 2 0 0 1 .5-4 3 3 0 0 1 5.500 0 2 2 0 0 1 0 4z" fill="#b8d3f2" /><path d="M9 15.500a2 2 0 0 1 0-4 2.800 2.800 0 0 1 5 0 2 2 0 0 1 0 4z" fill="#c9d8f4" /></svg>
          <span><strong>72°F</strong><small>Partly cloudy</small></span>
        </Weather>
        <Dock>
          <HostStart aria-label="Start menu"><Flag11 /></HostStart>
          <HostSearch>
            <svg width="10" height="10" viewBox="0 0 10 10" fill="none" stroke="#eee" strokeWidth="1.400"><circle cx="4" cy="4" r="3.200" /><path d="M6.500 6.500L9.500 9.500" /></svg>
            <input aria-label="Search" placeholder="Search" />
            <svg width="33" height="17" viewBox="0 0 33 17"><g fill="#b58a2c"><circle cx="3.500" cy="7" r="3" /><path d="M1 9h6l1 6q-5 1-7-3z" /></g><g fill="#e07a35"><circle cx="13" cy="5" r="5" /><path d="M7 17q-1-8 6-8t6 8z" /></g><g fill="#f08a80"><circle cx="22" cy="10" r="3.500" /><path d="M18 17q0-5 4-5t4 5z" /></g><g fill="#e23d28"><circle cx="28" cy="8" r="4.500" /><path d="M24 16q0-6 4-6 5 1 4 5-3 2-8 1z" /></g></svg>
          </HostSearch>
          <DockApps>{dock.map((a) => <DockApp key={a.name} aria-label={a.name} $run={a.run} $active={a.active}>{a.art}{a.badge && <Badge>{a.badge}</Badge>}</DockApp>)}</DockApps>
        </Dock>
        <HostTray>
          <HostTrayButton $w={22} aria-label="Show hidden icons"><Chevron d="u" /></HostTrayButton>
          <HostTrayButton $w={21} aria-label="Microphone"><svg width="8" height="12" viewBox="0 0 8 12" fill="none" stroke="#c9ced2"><rect x="2.500" y=".5" width="3" height="6" rx="1.500" /><path d="M.5 5q0 3.500 3.500 3.500T7.500 5M4 8.500V11" /></svg></HostTrayButton>
          <HostTrayButton $w={30}>ع</HostTrayButton>
          <HostTrayButton $w={18} aria-label="Host network"><svg width="12" height="11" viewBox="0 0 12 11" fill="none" stroke="#e4e4e4"><path d="M7 1.500H.5v6H10V6M3 10h5M5.500 7.500V10M8.500.5h2.500v3H8.500zM9.800 3.500v3" /></svg></HostTrayButton>
          <HostTrayButton $w={15} aria-label="Host volume"><Speaker><path d="M7.500 3.500q1.500 1.500 0 3M9.500 2q2.500 3 0 6" /></Speaker></HostTrayButton>
          <HostClock>2:53 AM<br />3/8/2026</HostClock>
        </HostTray>
      </HostBar>
    </Screen>
  );
}
